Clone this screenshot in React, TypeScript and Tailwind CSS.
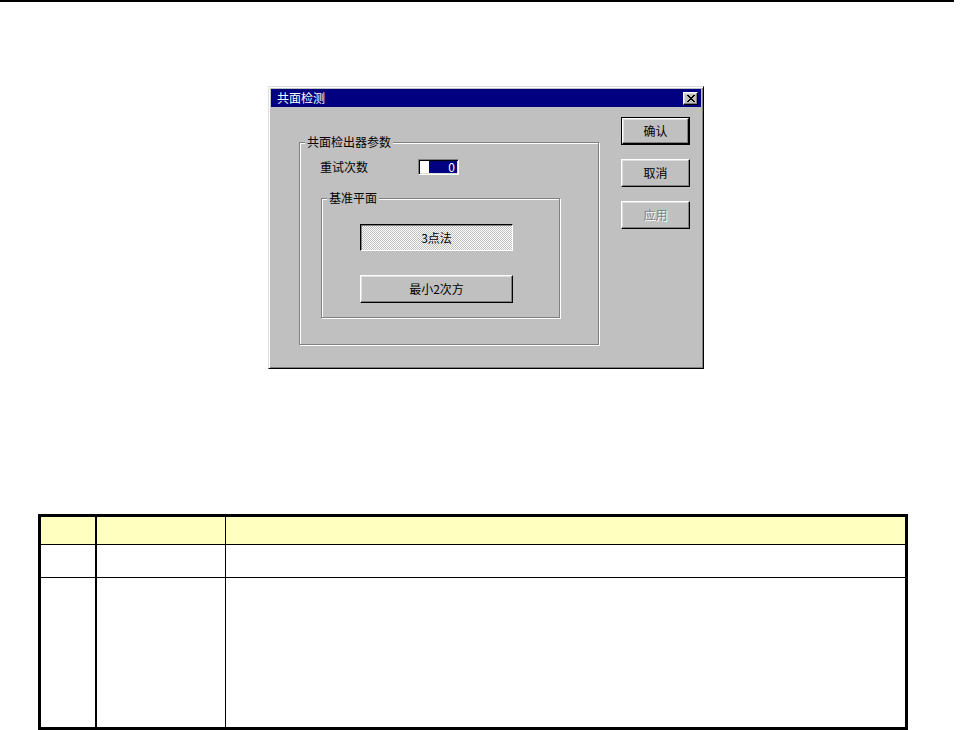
const font = "font-['SimSun','Noto_Sans_CJK_SC',sans-serif] text-[12px] leading-[14px]";

// raised win95 button edge
const raised =
  "bg-[#c0c0c0] border border-t-white border-l-white border-r-black border-b-black shadow-[inset_-1px_-1px_0_#808080,inset_1px_1px_0_#dfdfdf]";

function GroupBox({ label, className, children }: { label: string; className: string; children?: React.ReactNode }) {
  return (
    <div className={`relative border border-[#808080] shadow-[1px_1px_0_#fff,inset_1px_1px_0_#fff] ${className}`}>
      <span className={`absolute left-[5px] top-[-8px] bg-[#c0c0c0] px-[2px] text-black ${font}`}>{label}</span>
      {children}
    </div>
  );
}

function Button({ label, isDefault, disabled }: { label: string; isDefault?: boolean; disabled?: boolean }) {
  const text = disabled ? "text-[#808080] [text-shadow:1px_1px_0_#fff]" : "text-black";
  if (isDefault) {
    return (
      <div className="w-[69px] h-[28px] border border-black flex">
        <div className={`flex-1 flex items-center justify-center ${raised} ${font} ${text}`}>{label}</div>
      </div>
    );
  }
  return (
    <div className={`w-[69px] h-[28px] flex items-center justify-center ${raised} ${font} ${text}`}>{label}</div>
  );
}

function Dialog() {
  return (
    <div className="w-[436px] h-[283px] bg-[#c0c0c0] border border-t-[#dfdfdf] border-l-[#dfdfdf] border-r-black border-b-black shadow-[inset_1px_1px_0_#fff,inset_-1px_-1px_0_#808080] p-[2px] flex flex-col">
      {/* title bar */}
      <div className="h-[18px] bg-[#000080] flex items-center justify-between pl-[6px] pr-[3px]">
        <span className={`text-white ${font}`}>共面检测</span>
        <div className={`w-[15px] h-[13px] flex items-center justify-center ${raised}`}>
          <svg width="8" height="7" viewBox="0 0 8 7" shapeRendering="crispEdges">
            <path d="M0 0h2v1h-2zM6 0h2v1h-2zM1 1h2v1h-2zM5 1h2v1h-2zM2 2h4v1h-4zM3 3h2v1h-2zM2 4h4v1h-4zM1 5h2v1h-2zM5 5h2v1h-2zM0 6h2v1h-2zM6 6h2v1h-2z" fill="#000" />
          </svg>
        </div>
      </div>

      <div className="flex flex-1">
        <div className="pl-[28px] pt-[35px]">
          <GroupBox label="共面检出器参数" className="w-[300px] h-[203px]">
            <div className="pl-[20px] pt-[16px]">
              <div className="flex items-center h-[16px]">
                <span className={`w-[98px] text-black ${font}`}>重试次数</span>
                <div className="w-[41px] h-[16px] bg-white border border-t-[#808080] border-l-[#808080] border-r-white border-b-white shadow-[inset_1px_1px_0_#000,inset_-1px_-1px_0_#dfdfdf] flex items-center pl-[10px] pr-[1px]">
                  <div className="flex-1 h-[12px] bg-[#000080] flex items-center justify-end pr-[2px]">
                    <span className={`text-white ${font} leading-[12px]`}>0</span>
                  </div>
                </div>
              </div>
              <GroupBox label="基准平面" className="mt-[23px] ml-[1px] w-[239px] h-[120px]">
                <div className="pl-[38px] pt-[25px] flex flex-col gap-[24px]">
                  <div className={`w-[153px] h-[27px] flex items-center justify-center border border-t-black border-l-black border-r-white border-b-white shadow-[inset_1px_1px_0_#808080] bg-[repeating-conic-gradient(#ffffff_0_25%,#c0c0c0_0_50%)] bg-[length:2px_2px] text-black ${font}`}>
                    3点法
                  </div>
                  <div className={`w-[153px] h-[28px] flex items-center justify-center ${raised} text-black ${font}`}>
                    最小2次方
                  </div>
                </div>
              </GroupBox>
            </div>
          </GroupBox>
        </div>
        <div className="ml-[22px] pt-[10px] flex flex-col gap-[14px]">
          <Button label="确认" isDefault />
          <Button label="取消" />
          <Button label="应用" disabled />
        </div>
      </div>
    </div>
  );
}

function Table() {
  return (
    <div className="w-[870px] h-[216px] border-[3px] border-black grid grid-cols-[56px_129px_1fr] grid-rows-[28px_33px_1fr]">
      <div className="bg-[#ffffc0] border-r-2 border-b border-black" />
      <div className="bg-[#ffffc0] border-r border-b border-black" />
      <div className="bg-[#ffffc0] border-b border-black" />
      <div className="border-r-2 border-b border-black" />
      <div className="border-r border-b border-black" />
      <div className="border-b border-black" />
      <div className="border-r-2 border-black" />
      <div className="border-r border-black" />
      <div />
    </div>
  );
}

export default function App() {
  return (
    <div className="w-[970px] h-[730px] bg-white overflow-hidden flex flex-col">
      <div className="w-[954px] h-[2px] bg-black" />
      <div className="mt-[84px] ml-[268px]">
        <Dialog />
      </div>
      <div className="mt-[145px] ml-[38px]">
        <Table />
      </div>
    </div>
  );
}
